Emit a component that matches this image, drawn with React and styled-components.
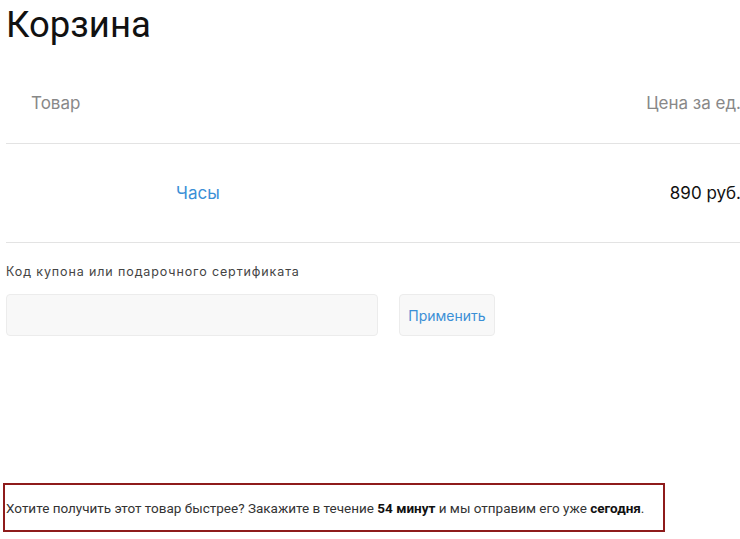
import React from "react";
import styled, { createGlobalStyle } from "styled-components";

const Global = createGlobalStyle`
  html, body { margin: 0; padding: 0; background: #fff; }
  body { font-family: Roboto, "Liberation Sans", sans-serif; color: #222; overflow: hidden; }
`;

const Page = styled.div`
  width: 740px;
  padding-left: 6px;
  box-sizing: border-box;
  overflow: hidden;
`;

const Title = styled.h1`
  margin: 0;
  padding-top: 5px;
  font-family: Roboto, "Liberation Sans", sans-serif;
  font-weight: 400;
  font-size: 36.5px;
  line-height: 40px;
  color: #111;
`;

const Table = styled.table`
  width: 735px;
  border-collapse: collapse;
  margin-top: 18px;
  font-family: Inter, Roboto, sans-serif;
`;

const Th = styled.th`
  font-weight: 400;
  font-size: 17px;
  color: #888;
  text-align: ${(p) => p.$align || "left"};
  height: 80px;
  padding: 0 ${(p) => (p.$align === "right" ? "0" : "25px")};
  border-bottom: 1px solid #e3e3e3;
`;

const Td = styled.td`
  font-size: 17px;
  height: 98px;
  text-align: ${(p) => p.$align || "left"};
  padding: 0;
  border-bottom: 1px solid #e3e3e3;
  color: #111;
`;

const ProductLink = styled.a`
  color: #3b8fd6;
  text-decoration: none;
  display: inline-block;
  padding-left: 170px;
`;

const CouponLabel = styled.div`
  margin-top: 21px;
  font-family: Inter, Roboto, sans-serif;
  font-size: 12.5px;
  letter-spacing: 0.88px;
  color: #444;
`;

const CouponRow = styled.div`
  display: flex;
  gap: 21px;
  margin-top: 15px;
`;

const CouponInput = styled.input`
  width: 372px;
  height: 42px;
  box-sizing: border-box;
  background: #f8f8f8;
  border: 1px solid #ececec;
  border-radius: 4px;
  outline: none;
`;

const ApplyButton = styled.button`
  width: 96px;
  height: 42px;
  background: #f8f8f8;
  border: 1px solid #ececec;
  border-radius: 4px;
  color: #3b8fd6;
  font-family: Inter, Roboto, sans-serif;
  font-size: 14px;
  padding: 0;
`;

const Notice = styled.div`
  margin: 147px 0 0 -3px;
  width: 662px;
  height: 49px;
  box-sizing: border-box;
  border: 2px solid #8e1b1b;
  padding: 0 1px;
  display: flex;
  align-items: center;
  font-family: Roboto, "Liberation Sans", sans-serif;
  font-size: 13.5px;
  color: #333;
  b { color: #111; font-weight: 700; }
`;

export default function App() {
  return (
    <>
      <Global />
      <Page>
        <Title>Корзина</Title>
        <Table>
          <thead>
            <tr>
              <Th>Товар</Th>
              <Th $align="right">Цена за ед.</Th>
            </tr>
          </thead>
          <tbody>
            <tr>
              <Td><ProductLink href="#">Часы</ProductLink></Td>
              <Td $align="right">890 руб.</Td>
            </tr>
          </tbody>
        </Table>
        <CouponLabel>Код купона или подарочного сертификата</CouponLabel>
        <CouponRow>
          <CouponInput />
          <ApplyButton>Применить</ApplyButton>
        </CouponRow>
        <Notice>
          <span>
            Хотите получить этот товар быстрее? Закажите в течение <b>54 минут</b> и мы отправим его уже <b>сегодня</b>.
          </span>
        </Notice>
      </Page>
    </>
  );
}
